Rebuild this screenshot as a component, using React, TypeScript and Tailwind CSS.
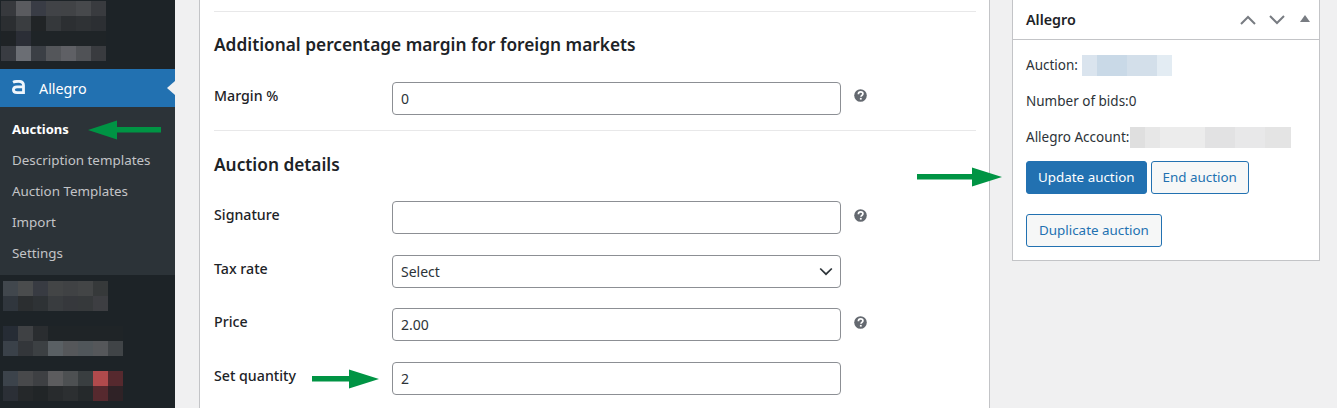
import React from "react";

function Pixels({ rows, className }: { rows: string[][]; className?: string }) {
  return (
    <div className={"flex flex-col " + (className ?? "")}>
      {rows.map((r, i) => (
        <div key={i} className="flex h-[15px]">
          {r.map((c, j) => (
            <div key={j} className="w-[15px] h-[15px]" style={{ background: c }} />
          ))}
        </div>
      ))}
    </div>
  );
}

const topRows = [
  ["#37393d", "#5a5b5f", "#393c45", "#414347", "#414346", "#47494c", "#393b3f"],
  ["#2b2e31", "#3a3d40", "#212426", "#35383b", "#2c2f32", "#2f3235", "#2c2f33"],
  ["#1f2326", "#2b2e36", "#1f2427", "#1f2427", "#1f2427", "#1f2427", "#1f2427"],
  ["#393c42", "#6b6e74", "#3b3f45", "#54565a", "#5f6065", "#505256", "#393b3f"],
];
const blobA = [
  ["#41474d", "#4a4c4d", "#383b42", "#434546", "#404244", "#434546", "#36393a"],
  ["#30363d", "#2b2e30", "#2e3235", "#393c3f", "#36383c", "#36393b", "#3d3e42"],
];
const blobB = [
  ["#262c35", "#3f4144", "#2a2d30", "#1f2427", "#1f2427", "#1f2427", "#1f2427", "#1f2427"],
  ["#3a4149", "#33363a", "#3c4043", "#5a6064", "#55575a", "#50565a", "#55575a", "#404447"],
];
const blobC = [
  ["#3c434b", "#48494b", "#3e4043", "#5c5c5e", "#4d5052", "#393e40", "#b14a4c", "#56292e"],
  ["#2b2f36", "#25282a", "#212527", "#282b2d", "#2c2f31", "#25292b", "#56292e", "#2f2226"],
];

function Help() {
  return (
    <svg width="14" height="14" viewBox="0 0 14 14" className="shrink-0">
      <circle cx="6.5" cy="6.5" r="6.3" fill="#646970" />
      <path d="M4.4 5.2c0-1.5 1.1-2.3 2.3-2.3 1.3 0 2.2.8 2.2 1.9 0 1.5-1.9 1.6-1.9 3" fill="none" stroke="#fff" strokeWidth="1.7" />
      <rect x="5.9" y="8.9" width="1.8" height="1.7" fill="#fff" />
    </svg>
  );
}

function Arrow({ className, width, flip }: { className: string; width: number; flip?: boolean }) {
  return (
    <svg width={width} height="20" viewBox={`0 0 ${width} 20`} className={"absolute " + className}>
      {flip ? (
        <path d={`M0 10L29 0.5V19.5Z M29 7H${width}V12.5H29Z`} fill="#009444" />
      ) : (
        <path d={`M${width} 10L${width - 30} 0.5V19.5Z M${width - 30} 7H0V12.5H${width - 30}Z`} fill="#009444" />
      )}
    </svg>
  );
}

function Row({ label, value, help, select, mt, helpMt }: { label: string; value?: string; help?: boolean; select?: boolean; mt: string; helpMt?: string }) {
  return (
    <div className={"flex items-start " + mt}>
      <div className="w-[178px] font-medium text-[14.2px] leading-[20px] pt-[4px] text-[#1d2327]">{label}</div>
      <div className="w-[449px] h-[33px] rounded-[4px] border border-[#8c8f94] bg-white flex items-center justify-between pl-[8px] pr-[7px] text-[14px] text-[#2c3338]">
        <span>{value}</span>
        {select && (
          <svg width="14" height="9" viewBox="0 0 14 9">
            <path d="M1.2 1.5L7 7.2L12.8 1.5" fill="none" stroke="#2c3338" strokeWidth="1.7" />
          </svg>
        )}
      </div>
      {help && <div className={"ml-[13px] " + (helpMt ?? "mt-[8px]")}><Help /></div>}
    </div>
  );
}

function Btn({ children, primary, wide }: { children: React.ReactNode; primary?: boolean; wide?: boolean }) {
  return (
    <div
      className={
        "h-[33px] rounded-[3px] border border-[#2271b1] flex items-center text-[13.4px] " +
        (wide ? "px-[12px] " : "px-[11px] ") +
        (primary ? "bg-[#2271b1] text-white" : "bg-[#f6f7f7] text-[#2271b1]")
      }
    >
      {children}
    </div>
  );
}

export default function App() {
  return (
    <div className="relative flex w-[1337px] h-[408px] overflow-hidden bg-[#f0f0f1] font-['Noto_Sans','Open_Sans',sans-serif] text-[#2c3338]">
      <aside className="w-[175px] shrink-0 bg-[#1d2327] flex flex-col">
        <Pixels rows={topRows} className="mt-[1px] ml-[1px]" />
        <div className="relative mt-[8px] h-[38px] bg-[#2271b1] flex items-center text-white text-[14.3px]">
          <svg width="16" height="14" viewBox="0 0 16 14" className="ml-[11px] mb-[2px]">
            <path d="M2 2.2C3.5 1.5 5.5 1.3 7.5 1.3c3.4 0 5 1 5 4V14M12.5 6.8H6C3.5 6.8 2.4 7.9 2.4 9.8 2.4 11.7 3.8 12.6 6 12.6H12.5" fill="none" stroke="#f0f6fc" strokeWidth="2.8" />
          </svg>
          <span className="ml-[12px] pt-[1px]">Allegro</span>
          <div className="absolute right-0 top-[12px] w-0 h-0 border-y-[7px] border-y-transparent border-r-[8px] border-r-[#f0f0f1]" />
        </div>
        <div className="h-[168px] bg-[#2c3338] pt-[7px] pl-[12px] flex flex-col text-[13.4px] text-[#c3c4c7]">
          <div className="h-[31px] flex items-center font-bold text-white text-[13px]">Auctions</div>
          <div className="h-[31px] flex items-center">Description templates</div>
          <div className="h-[31px] flex items-center">Auction Templates</div>
          <div className="h-[31px] flex items-center">Import</div>
          <div className="h-[31px] flex items-center">Settings</div>
        </div>
        <Pixels rows={blobA} className="mt-[6px] ml-[3px]" />
        <Pixels rows={blobB} className="mt-[15px] ml-[3px]" />
        <Pixels rows={blobC} className="mt-[15px] ml-[3px]" />
      </aside>

      <main className="ml-[24px] w-[791px] h-[430px] shrink-0 border-x border-[#c3c4c7] bg-white pl-[14px] pr-[13px]">
        <div className="mt-[11px] border-t border-[#e8e8e9] pt-[21px]">
          <h2 className="text-[17.3px] leading-[24px] font-semibold text-[#1d2327]">Additional percentage margin for foreign markets</h2>
          <Row label="Margin %" value="0" help helpMt="mt-[7px]" mt="mt-[25px]" />
        </div>
        <div className="mt-[15px] border-t border-[#e8e8e9] pt-[22px]">
          <h2 className="text-[17.3px] leading-[24px] font-semibold text-[#1d2327]">Auction details</h2>
          <Row label="Signature" help mt="mt-[24px]" />
          <Row label="Tax rate" value="Select" select mt="mt-[21px]" />
          <Row label="Price" value="2.00" help mt="mt-[20px]" />
          <Row label="Set quantity" value="2" mt="mt-[21px]" />
        </div>
      </main>

      <section className="ml-[22px] w-[308px] h-[261px] shrink-0 border border-t-0 border-[#c3c4c7] bg-white">
        <div className="h-[40px] border-b border-[#c3c4c7] flex items-center pl-[13px] pr-[9px]">
          <span className="font-semibold text-[14.3px] text-[#1d2327]">Allegro</span>
          <div className="ml-auto flex items-center">
            <svg width="16" height="10" viewBox="0 0 16 10"><path d="M1 9L8 2L15 9" fill="none" stroke="#787c82" strokeWidth="2" /></svg>
            <svg width="16" height="10" viewBox="0 0 16 10" className="ml-[13px]"><path d="M1 1L8 8L15 1" fill="none" stroke="#787c82" strokeWidth="2" /></svg>
            <svg width="10" height="7" viewBox="0 0 10 7" className="ml-[15px] mb-[3px]"><path d="M5 0L10 7H0Z" fill="#787c82" /></svg>
          </div>
        </div>
        <div className="pl-[13px] pt-[15px] text-[13.5px] text-[#2c3338]">
          <div className="flex items-center h-[21px]">
            <span>Auction:</span>
            <div className="ml-[4px] flex h-[21px]">
              <div className="w-[15px] bg-[#dae4ee]" />
              <div className="w-[30px] bg-[#c9d9e7]" />
              <div className="w-[30px] bg-[#d3dfea]" />
              <div className="w-[15px] bg-[#e3ecf3]" />
            </div>
          </div>
          <div className="mt-[15px] h-[21px] flex items-center">Number of bids:0</div>
          <div className="mt-[15px] flex items-center h-[21px]">
            <span>Allegro Account:</span>
            <div className="ml-[1px] flex h-[21px]">
              <div className="w-[15px] bg-[#dfdfdf]" />
              <div className="w-[15px] bg-[#e7e7e7]" />
              <div className="w-[45px] bg-[#ececec]" />
              <div className="w-[30px] bg-[#e2e2e3]" />
              <div className="w-[30px] bg-[#e8e8e9]" />
              <div className="w-[26px] bg-[#e4e4e4]" />
            </div>
          </div>
          <div className="mt-[13px] flex gap-[4px]">
            <Btn primary>Update auction</Btn>
            <Btn>End auction</Btn>
          </div>
          <div className="mt-[20px] flex">
            <Btn wide>Duplicate auction</Btn>
          </div>
        </div>
      </section>

      <Arrow className="left-[88px] top-[120px]" width={73} flip />
      <Arrow className="left-[917px] top-[167px]" width={85} />
      <Arrow className="left-[312px] top-[369px]" width={67} />
    </div>
  );
}
